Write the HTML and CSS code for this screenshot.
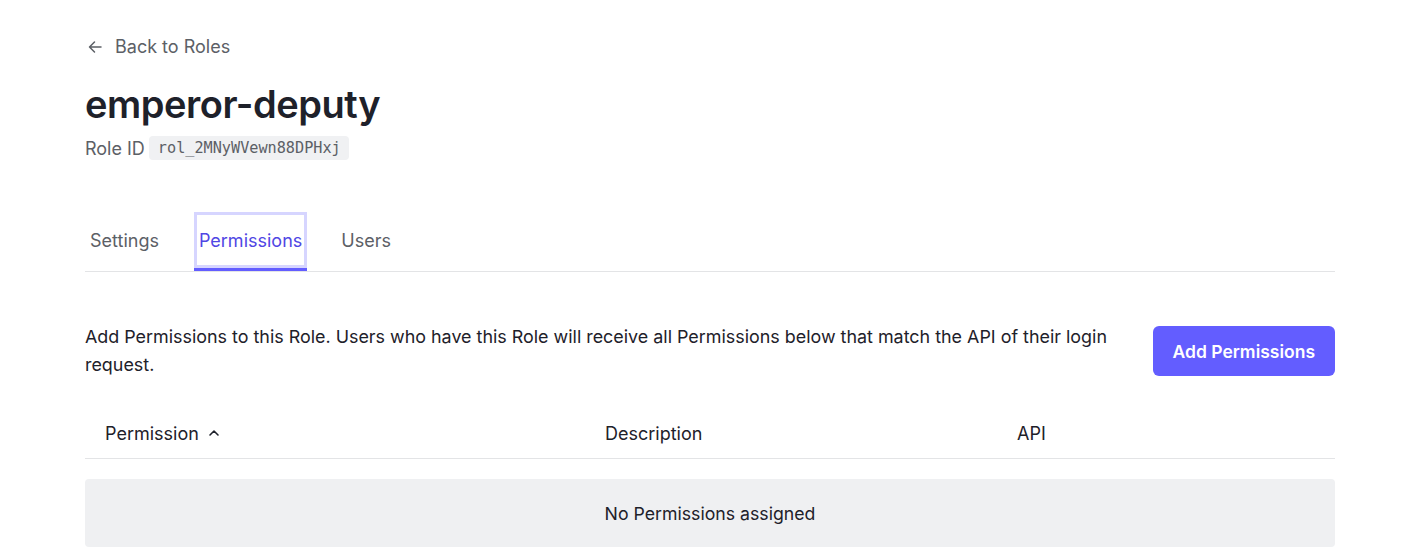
FILE: index.html
```html
<!DOCTYPE html>
<html>
<head>
<meta charset="utf-8">
<link rel="stylesheet" href="styles.css">
</head>
<body>
<div class="page">
  <a class="back" href="#">
    <svg class="back-icon" width="16" height="16" viewBox="0 0 16 16" fill="none" stroke="currentColor" stroke-width="1.5" stroke-linecap="round" stroke-linejoin="round"><path d="M14 8H2.5M7.5 3L2.5 8l5 5"/></svg>
    <span>Back to Roles</span>
  </a>
  <h1 class="title">emperor-deputy</h1>
  <div class="role-id"><span class="role-label">Role ID</span><code class="role-code">rol_2MNyWVewn88DPHxj</code></div>

  <nav class="tabs">
    <a class="tab" href="#">Settings</a>
    <a class="tab active" href="#">Permissions</a>
    <a class="tab" href="#">Users</a>
  </nav>

  <div class="intro">
    <p class="intro-text">Add Permissions to this Role. Users who have this Role will receive all Permissions below that match the API of their login request.</p>
    <button class="btn-primary">Add Permissions</button>
  </div>

  <div class="table">
    <div class="thead">
      <div class="th col-perm">Permission
        <svg class="sort" width="14" height="14" viewBox="0 0 14 14" fill="none" stroke="currentColor" stroke-width="1.6" stroke-linecap="round" stroke-linejoin="round"><path d="M3 9l4-4 4 4"/></svg>
      </div>
      <div class="th col-desc">Description</div>
      <div class="th col-api">API</div>
    </div>
    <div class="empty">No Permissions assigned</div>
  </div>
</div>
</body>
</html>
```
FILE: styles.css
```css
* { box-sizing: border-box; }
html, body { margin: 0; padding: 0; background: #fff; }
body {
  font-family: Inter, "Noto Sans", sans-serif;
  color: #1e212a;
  -webkit-font-smoothing: antialiased;
}
.page {
  width: 1250px;
  margin-left: 85px;
  padding-top: 36px;
}
.back {
  display: inline-flex;
  align-items: center;
  gap: 12px;
  color: #5c6066;
  text-decoration: none;
  font-size: 18px;
  line-height: 22px;
  margin-left: 2px;
}
.back-icon { display: block; }
.title {
  margin: 21px 0 0;
  font-size: 38px;
  line-height: 48px;
  font-weight: 600;
  color: #1e212a;
  letter-spacing: -0.45px;
}
.role-id {
  display: flex;
  align-items: center;
  gap: 4px;
  margin-top: 8px;
  font-size: 18px;
  color: #5c6066;
}
.role-code {
  font-family: "DejaVu Sans Mono", "Liberation Mono", monospace;
  font-size: 15.2px;
  background: #f0f1f3;
  border-radius: 4px;
  padding: 0 8px 0 9px;
  line-height: 24px;
  color: #5c6066;
}
.tabs {
  display: flex;
  margin-top: 52px;
  border-bottom: 1px solid #e3e4e6;
  height: 60px;
}
.tab {
  display: flex;
  align-items: center;
  padding: 0 5px;
  margin-right: 29px;
  font-size: 18px;
  color: #5c6066;
  text-decoration: none;
  border-bottom: 3px solid transparent;
}
.tab:first-child { margin-right: 30px; }
.tab.active {
  color: #5046e4;
  border-bottom-color: #635dff;
  box-shadow: inset 0 0 0 3px #d6d5ff;
}
.intro {
  display: flex;
  align-items: center;
  justify-content: space-between;
  margin-top: 51px;
  gap: 32px;
}
.intro-text {
  flex: 1;
  margin: 0;
  font-size: 17.9px;
  line-height: 28px;
  color: #1e212a;
}
.btn-primary {
  flex: none;
  height: 50px;
  padding: 0 20px;
  border: 0;
  border-radius: 6px;
  background: #635dff;
  color: #fff;
  font-family: inherit;
  font-size: 17.5px;
  font-weight: 600;
}
.table { margin-top: 29px; }
.thead {
  display: flex;
  height: 51px;
  border-bottom: 1px solid #e3e4e6;
}
.th {
  display: flex;
  align-items: center;
  gap: 8px;
  padding-left: 20px;
  font-size: 18px;
  font-weight: 400;
  color: #1e212a;
}
.col-perm { width: 500px; }
.col-desc { width: 412px; }
.col-api { flex: 1; }
.sort { display: block; margin-top: 0; }
.empty {
  margin-top: 20px;
  height: 68px;
  background: #eff0f2;
  border-radius: 4px;
  display: flex;
  align-items: center;
  justify-content: center;
  font-size: 17.7px;
  color: #1e212a;
}
```
